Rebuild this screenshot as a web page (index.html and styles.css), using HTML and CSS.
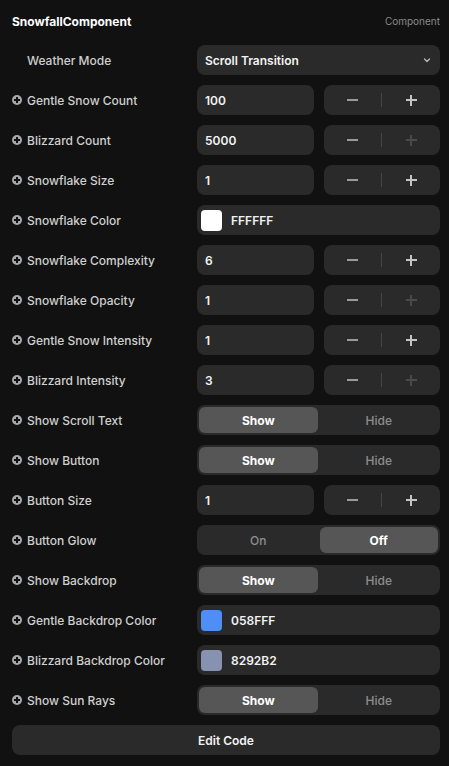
FILE: index.html
```html
<!DOCTYPE html>
<html>
<head>
<meta charset="utf-8">
<link rel="stylesheet" href="styles.css">
</head>
<body>
<div class="panel">
  <div class="header">
    <span class="title">SnowfallComponent</span>
    <span class="kind">Component</span>
  </div>
  <div class="rows">
    <div class="row">
      <div class="label nolead">Weather Mode</div>
      <div class="select"><span>Scroll Transition</span>
        <svg class="chev" width="10" height="10" viewBox="0 0 10 10"><path d="M2.5 4l2.5 2.5L7.5 4" fill="none" stroke="#bbb" stroke-width="1.3" stroke-linecap="round" stroke-linejoin="round"/></svg>
      </div>
    </div>

    <div class="row">
      <div class="label"><i class="plus"></i>Gentle Snow Count</div>
      <div class="numctl"><div class="field">100</div><div class="stepper"><span class="btn minus"></span><span class="div"></span><span class="btn plusb"></span></div></div>
    </div>
    <div class="row">
      <div class="label"><i class="plus"></i>Blizzard Count</div>
      <div class="numctl"><div class="field">5000</div><div class="stepper"><span class="btn minus"></span><span class="div"></span><span class="btn plusb off"></span></div></div>
    </div>
    <div class="row">
      <div class="label"><i class="plus"></i>Snowflake Size</div>
      <div class="numctl"><div class="field">1</div><div class="stepper"><span class="btn minus"></span><span class="div"></span><span class="btn plusb"></span></div></div>
    </div>
    <div class="row">
      <div class="label"><i class="plus"></i>Snowflake Color</div>
      <div class="color"><span class="swatch sw-white"></span>FFFFFF</div>
    </div>
    <div class="row">
      <div class="label"><i class="plus"></i>Snowflake Complexity</div>
      <div class="numctl"><div class="field">6</div><div class="stepper"><span class="btn minus"></span><span class="div"></span><span class="btn plusb"></span></div></div>
    </div>
    <div class="row">
      <div class="label"><i class="plus"></i>Snowflake Opacity</div>
      <div class="numctl"><div class="field">1</div><div class="stepper"><span class="btn minus"></span><span class="div"></span><span class="btn plusb off"></span></div></div>
    </div>
    <div class="row">
      <div class="label"><i class="plus"></i>Gentle Snow Intensity</div>
      <div class="numctl"><div class="field">1</div><div class="stepper"><span class="btn minus"></span><span class="div"></span><span class="btn plusb"></span></div></div>
    </div>
    <div class="row">
      <div class="label"><i class="plus"></i>Blizzard Intensity</div>
      <div class="numctl"><div class="field">3</div><div class="stepper"><span class="btn minus"></span><span class="div"></span><span class="btn plusb off"></span></div></div>
    </div>
    <div class="row">
      <div class="label"><i class="plus"></i>Show Scroll Text</div>
      <div class="seg"><span class="opt active">Show</span><span class="opt">Hide</span></div>
    </div>
    <div class="row">
      <div class="label"><i class="plus"></i>Show Button</div>
      <div class="seg"><span class="opt active">Show</span><span class="opt">Hide</span></div>
    </div>
    <div class="row">
      <div class="label"><i class="plus"></i>Button Size</div>
      <div class="numctl"><div class="field">1</div><div class="stepper"><span class="btn minus"></span><span class="div"></span><span class="btn plusb"></span></div></div>
    </div>
    <div class="row">
      <div class="label"><i class="plus"></i>Button Glow</div>
      <div class="seg"><span class="opt">On</span><span class="opt active">Off</span></div>
    </div>
    <div class="row">
      <div class="label"><i class="plus"></i>Show Backdrop</div>
      <div class="seg"><span class="opt active">Show</span><span class="opt">Hide</span></div>
    </div>
    <div class="row">
      <div class="label"><i class="plus"></i>Gentle Backdrop Color</div>
      <div class="color"><span class="swatch sw-blue"></span>058FFF</div>
    </div>
    <div class="row">
      <div class="label"><i class="plus"></i>Blizzard Backdrop Color</div>
      <div class="color"><span class="swatch sw-gray"></span>8292B2</div>
    </div>
    <div class="row">
      <div class="label"><i class="plus"></i>Show Sun Rays</div>
      <div class="seg"><span class="opt active">Show</span><span class="opt">Hide</span></div>
    </div>
    <div class="editbtn">Edit Code</div>
  </div>
</div>
</body>
</html>
```

FILE: styles.css
```css
html, body {
  margin: 0;
  padding: 0;
  background: #111111;
}
body {
  font-family: Inter, "Noto Sans", sans-serif;
  color: #e6e6e6;
  font-size: 12px;
}
.panel {
  padding: 12px 9px 11px 12px;
}
.header {
  display: flex;
  justify-content: space-between;
  align-items: center;
  height: 18px;
  margin-bottom: 15px;
}
.title {
  font-weight: 700;
  font-size: 12px;
  color: #ffffff;
}
.kind {
  font-size: 10px;
  color: #8a8a8a;
}
.rows {
  display: flex;
  flex-direction: column;
  gap: 10px;
}
.row {
  display: grid;
  grid-template-columns: 185px 1fr;
  height: 30px;
  align-items: center;
}
.label {
  display: flex;
  align-items: center;
  font-weight: 500;
  color: #cfcfcf;
  font-size: 12px;
}
.label.nolead {
  padding-left: 15px;
}
.plus {
  position: relative;
  display: inline-block;
  width: 10px;
  height: 10px;
  border-radius: 50%;
  background: #a8a8a8;
  margin-right: 5px;
}
.plus::before, .plus::after {
  content: "";
  position: absolute;
  background: #111;
}
.plus::before {
  left: 2px; right: 2px; top: 4.25px; height: 1.5px;
}
.plus::after {
  top: 2px; bottom: 2px; left: 4.25px; width: 1.5px;
}
.select {
  height: 30px;
  background: #2a2a2a;
  border-radius: 8px;
  display: flex;
  align-items: center;
  justify-content: space-between;
  padding: 0 8px 0 8px;
  font-weight: 600;
  color: #f2f2f2;
}
.chev { display: block; }
.numctl {
  display: grid;
  grid-template-columns: 1fr 1fr;
  gap: 10px;
  height: 30px;
}
.field {
  background: #2a2a2a;
  border-radius: 8px;
  display: flex;
  align-items: center;
  padding-left: 8px;
  font-weight: 600;
  color: #f2f2f2;
}
.stepper {
  background: #2a2a2a;
  border-radius: 8px;
  display: flex;
  align-items: center;
}
.stepper .btn {
  flex: 1;
  height: 30px;
  position: relative;
}
.stepper .div {
  width: 1px;
  height: 14px;
  background: #444;
}
.btn::before, .btn.plusb::after {
  content: "";
  position: absolute;
  left: 50%;
  top: 50%;
}
.minus::before {
  width: 11px; height: 1.5px;
  margin-left: -5.5px; margin-top: -0.75px;
  background: #9a9a9a;
}
.plusb::before {
  width: 11px; height: 1.5px;
  margin-left: -5.5px; margin-top: -0.75px;
  background: #c4c4c4;
}
.plusb::after {
  width: 1.5px; height: 11px;
  margin-left: -0.75px; margin-top: -5.5px;
  background: #c4c4c4;
}
.plusb.off::before, .plusb.off::after {
  background: #4a4a4a;
}
.color {
  height: 30px;
  background: #2a2a2a;
  border-radius: 8px;
  display: flex;
  align-items: center;
  padding-left: 4px;
  font-weight: 600;
  color: #f2f2f2;
}
.swatch {
  width: 21px;
  height: 21px;
  border-radius: 4px;
  margin-right: 9px;
}
.sw-white { background: #ffffff; }
.sw-blue { background: #4f8ef7; }
.sw-gray { background: #8792b0; }
.seg {
  height: 30px;
  background: #2a2a2a;
  border-radius: 8px;
  display: grid;
  grid-template-columns: 1fr 1fr;
  gap: 2px;
  padding: 2px;
  box-sizing: border-box;
}
.opt {
  display: flex;
  align-items: center;
  justify-content: center;
  border-radius: 6px;
  color: #8e8e8e;
  font-weight: 500;
}
.opt.active {
  background: #565656;
  color: #ffffff;
  font-weight: 700;
}
.editbtn {
  height: 30px;
  background: #2a2a2a;
  border-radius: 8px;
  display: flex;
  align-items: center;
  justify-content: center;
  font-weight: 600;
  color: #f2f2f2;
}
```
